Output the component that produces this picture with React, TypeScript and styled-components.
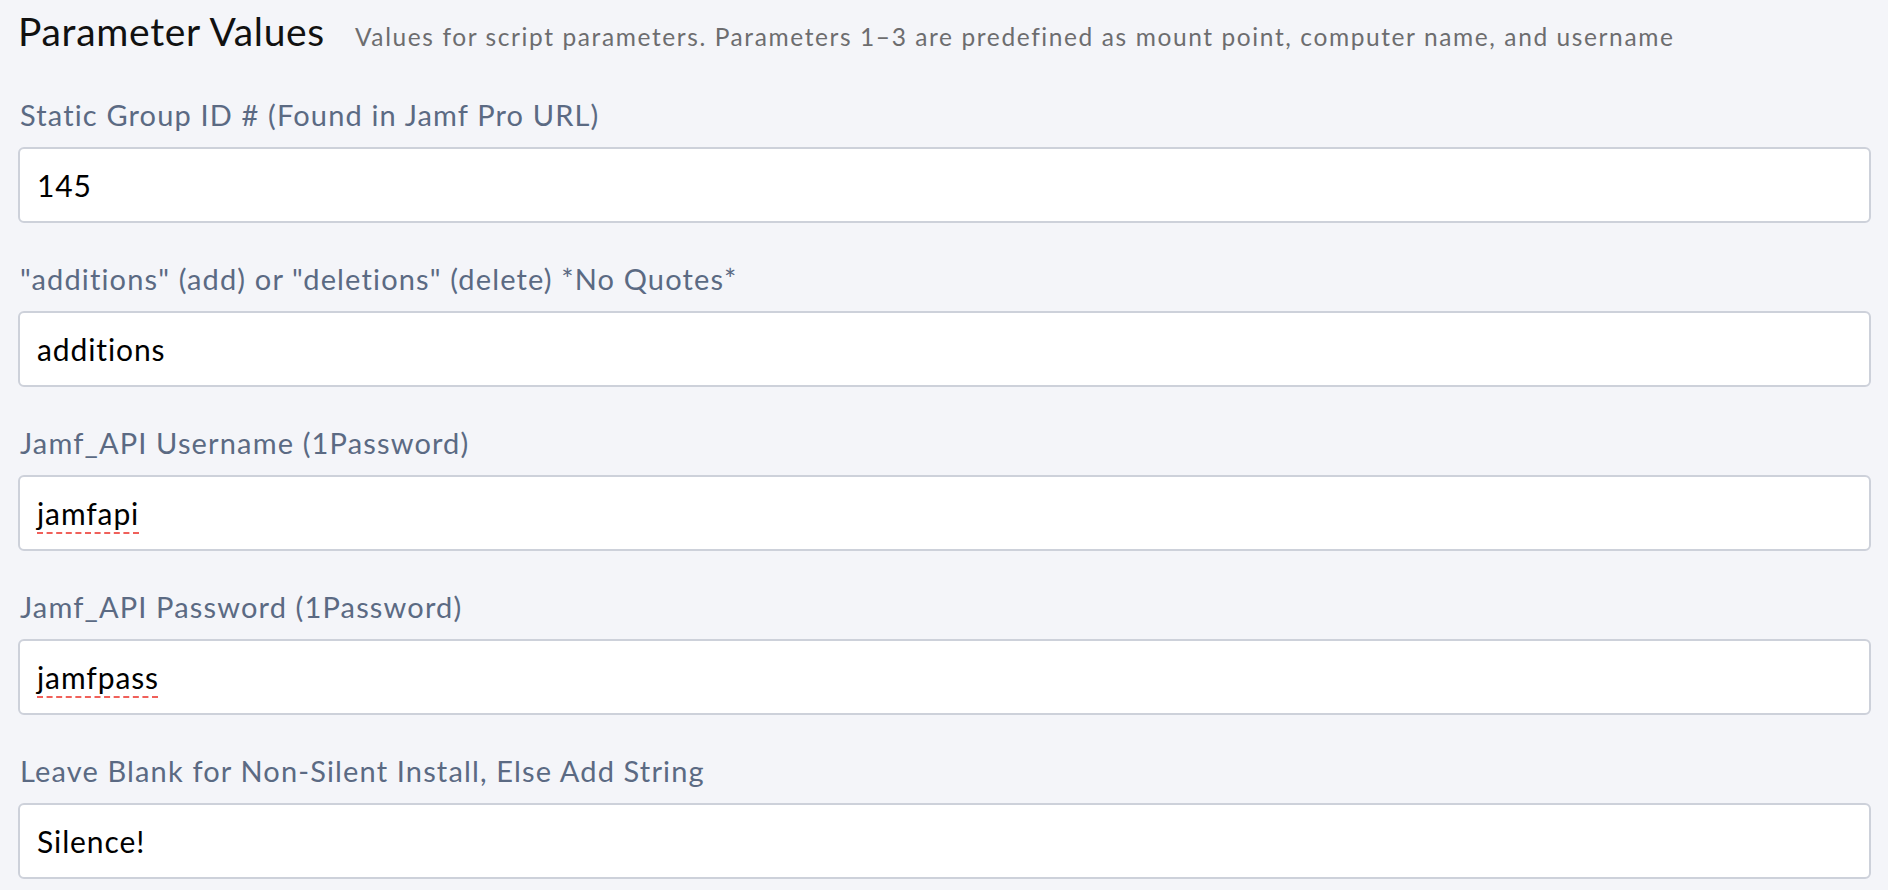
import React from "react";
import styled, { createGlobalStyle } from "styled-components";

interface Field {
    label: string;
    value: string;
    misspelled?: boolean;
}

const fields: Field[] = [
    { label: "Static Group ID # (Found in Jamf Pro URL)", value: "145" },
    { label: "\"additions\" (add) or \"deletions\" (delete) *No Quotes*", value: "additions" },
    { label: "Jamf_API Username (1Password)", value: "jamfapi", misspelled: true },
    { label: "Jamf_API Password (1Password)", value: "jamfpass", misspelled: true },
    { label: "Leave Blank for Non-Silent Install, Else Add String", value: "Silence!" },
];

const App: React.FC = () => {
    return (
        <>
            <GlobalStyle />
            <Page>
                {/* --- HEADER --- */}
                <Header>
                    <Title>Parameter Values</Title>
                    <Subtitle>
                        Values for script parameters. Parameters 1–3 are predefined as mount point, computer name, and username
                    </Subtitle>
                </Header>

                {/* --- FIELDS --- */}
                <FieldList>
                    {fields.map((f) => (
                        <FieldBlock key={f.label}>
                            <Label>{f.label}</Label>
                            <ValueBox>
                                {f.misspelled ? <Misspelled>{f.value}</Misspelled> : f.value}
                            </ValueBox>
                        </FieldBlock>
                    ))}
                </FieldList>
            </Page>
        </>
    );
};

export default App;

/* ---- Global ---- */
const GlobalStyle = createGlobalStyle`
    html, body {
        margin: 0;
        padding: 0;
        background: #f4f5f9;
        font-family: Lato, "Liberation Sans", sans-serif;
    }
`;

/* ---- Layout ---- */
const Page = styled.div`
    width: 1888px;
    height: 890px;
    box-sizing: border-box;
    padding: 8px 17px 0 18px;
    background: #f4f5f9;
    overflow: hidden;
`;

const Header = styled.div`
    display: flex;
    align-items: baseline;
    gap: 30px;
`;

const Title = styled.h1`
    margin: 0;
    font-size: 39px;
    font-weight: 400;
    letter-spacing: 0.7px;
    color: #111;
`;

const Subtitle = styled.span`
    font-size: 24.5px;
    letter-spacing: 1.6px;
    color: #6d6d6f;
`;

const FieldList = styled.div`
    display: flex;
    flex-direction: column;
    gap: 39px;
    margin-top: 44px;
`;

const FieldBlock = styled.div`
    display: flex;
    flex-direction: column;
    gap: 15px;
`;

const Label = styled.label`
    font-size: 29px;
    line-height: 34px;
    letter-spacing: 1.15px;
    color: #5b6a83;
    padding-left: 2px;
`;

const ValueBox = styled.div`
    box-sizing: border-box;
    height: 76px;
    display: flex;
    align-items: center;
    padding: 0 17px;
    background: #fff;
    border: 2px solid #cdd1da;
    border-radius: 6px;
    font-size: 30px;
    letter-spacing: 0.9px;
    color: #000;
`;

const Misspelled = styled.span`
    text-decoration: underline dashed #f0605a;
    text-decoration-thickness: 2px;
    text-underline-offset: 7px;
`;
